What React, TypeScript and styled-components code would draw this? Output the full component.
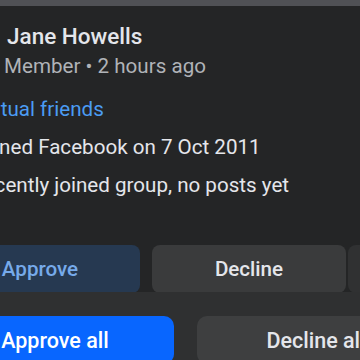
import React from "react";
import styled, { createGlobalStyle } from "styled-components";

const Global = createGlobalStyle`
  html, body {
    margin: 0;
    padding: 0;
    background: #242526;
    overflow: hidden;
  }
  body {
    font-family: Roboto, "Noto Sans", "Liberation Sans", sans-serif;
    -webkit-font-smoothing: antialiased;
  }
`;

const Screen = styled.div`
  width: 360px;
  height: 360px;
  overflow: hidden;
  background: #242526;
  position: relative;
`;

const TopEdge = styled.div`
  height: 6px;
  background: #505155;
`;

const Column = styled.div`
  margin-left: -60px;
  width: 470px;
  display: flex;
  flex-direction: column;
`;

const Header = styled.div`
  display: flex;
  align-items: flex-start;
  gap: 19px;
  margin-top: 16px;
`;

const Avatar = styled.div`
  width: 48px;
  height: 48px;
  border-radius: 50%;
  background: #3a3b3c;
  flex: none;
`;

const HeaderText = styled.div`
  display: flex;
  flex-direction: column;
  gap: 4px;
`;

const Name = styled.div`
  font-size: 22.5px;
  line-height: 28px;
  font-weight: 500;
  color: #e4e6eb;
`;

const Meta = styled.div`
  font-size: 20.6px;
  line-height: 24px;
  color: #b0b3b8;
  margin-left: -3px;
`;

const InfoList = styled.div`
  display: flex;
  flex-direction: column;
  gap: 14px;
  margin-top: 20px;
`;

const InfoRow = styled.div`
  display: flex;
  align-items: center;
  gap: 10px;
`;

const InfoIcon = styled.div`
  width: 21px;
  height: 20px;
  flex: none;
  border-radius: 4px;
  background: #b0b3b8;
`;

const InfoText = styled.div`
  font-size: 20.6px;
  line-height: 24px;
  color: #e4e6eb;
  white-space: nowrap;
`;

const FriendsLink = styled.a`
  font-size: 20.6px;
  line-height: 24px;
  color: #4b9cf3;
  text-decoration: none;
  margin-left: 3px;
  margin-top: -1px;
  white-space: nowrap;
`;

const ActionRow = styled.div`
  display: flex;
  margin-top: 48px;
  height: 48px;
`;

const ActionButton = styled.button<{ $variant: "primary" | "secondary" | "more" }>`
  border: none;
  border-radius: 8px;
  height: 48px;
  font-family: inherit;
  font-size: 20.6px;
  font-weight: 500;
  padding: 0;
  flex: none;
  width: ${(p) => (p.$variant === "more" ? "48px" : p.$variant === "primary" ? "200px" : "194px")};
  margin-right: ${(p) => (p.$variant === "primary" ? "12px" : p.$variant === "secondary" ? "2px" : "0")};
  background: ${(p) =>
    p.$variant === "primary" ? "#263951" : p.$variant === "secondary" ? "#3a3b3c" : "#303132"};
  color: ${(p) => (p.$variant === "primary" ? "#76aaea" : "#e4e6eb")};
`;

const Footer = styled.div`
  position: fixed;
  left: 0;
  right: 0;
  bottom: 0;
  height: 68px;
  background: #2f3031;
  padding-top: 24px;
  box-sizing: border-box;
  overflow: hidden;
`;

const FooterRow = styled.div`
  display: flex;
  gap: 23px;
  margin-left: -64px;
`;

const FooterButton = styled.button<{ $primary?: boolean }>`
  flex: none;
  width: 238px;
  height: 48px;
  border: none;
  border-radius: 10px;
  font-family: inherit;
  font-size: 21.5px;
  font-weight: 500;
  padding: 0;
  background: ${(p) => (p.$primary ? "#0866ff" : "#3e3f40")};
  color: ${(p) => (p.$primary ? "#ffffff" : "#e4e6eb")};
`;

export default function App() {
  return (
    <Screen>
      <Global />
      <TopEdge />
      <Column>
        <Header>
          <Avatar />
          <HeaderText>
            <Name>Jane Howells</Name>
            <Meta>Member • 2 hours ago</Meta>
          </HeaderText>
        </Header>
        <InfoList>
          <InfoRow>
            <FriendsLink>12 mutual friends</FriendsLink>
          </InfoRow>
          <InfoRow>
            <InfoIcon />
            <InfoText>Joined Facebook on 7 Oct 2011</InfoText>
          </InfoRow>
          <InfoRow>
            <InfoIcon />
            <InfoText>Recently joined group, no posts yet</InfoText>
          </InfoRow>
        </InfoList>
        <ActionRow>
          <ActionButton $variant="primary">Approve</ActionButton>
          <ActionButton $variant="secondary">Decline</ActionButton>
          <ActionButton $variant="more">···</ActionButton>
        </ActionRow>
      </Column>
      <Footer>
        <FooterRow>
          <FooterButton $primary>Approve all</FooterButton>
          <FooterButton>Decline all</FooterButton>
        </FooterRow>
      </Footer>
    </Screen>
  );
}
